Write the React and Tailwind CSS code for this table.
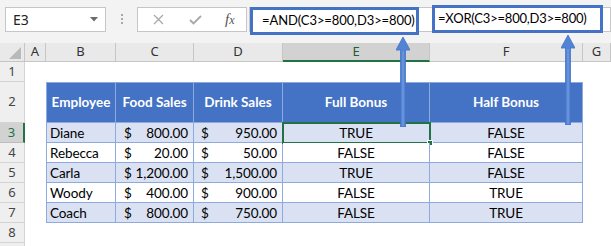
import React from "react";

const cols = ["A", "B", "C", "D", "E", "F", "G"];

const rows = [
  { name: "Diane", food: "800.00", drink: "950.00", full: "TRUE", half: "FALSE" },
  { name: "Rebecca", food: "20.00", drink: "50.00", full: "FALSE", half: "FALSE" },
  { name: "Carla", food: "1,200.00", drink: "1,500.00", full: "TRUE", half: "FALSE" },
  { name: "Woody", food: "400.00", drink: "900.00", full: "FALSE", half: "TRUE" },
  { name: "Coach", food: "800.00", drink: "750.00", full: "FALSE", half: "TRUE" },
];

const cellFont = { fontFamily: "Lato, 'Liberation Sans', sans-serif" };
const uiFont = { fontFamily: "'Noto Sans', 'Open Sans', sans-serif" };

function RowHead({ n, selected }) {
  return (
    <div
      className={
        "flex items-center justify-center border-b border-r text-[13px] " +
        (selected
          ? "bg-[#d2d2d2] border-b-[#bdbdbd] border-r-2 border-r-[#217346] text-[#217346]"
          : "bg-[#efefef] border-[#d4d4d4] text-[#444]")
      }
      style={uiFont}
    >
      {n}
    </div>
  );
}

function Arrow({ className }) {
  return (
    <svg className={className} viewBox="0 0 14 90" width="14" height="90">
      <path
        d="M7 0 L14 13 L9.5 13 L9.5 90 L4.5 90 L4.5 13 L0 13 Z"
        fill="#5283d4"
        stroke="#4472c4"
        strokeWidth="0.8"
      />
      <line x1="7" y1="14" x2="7" y2="89" stroke="#6d97dd" strokeWidth="1.6" />
    </svg>
  );
}

export default function App() {
  return (
    <div className="relative w-[611px] h-[246px] overflow-hidden bg-white">
      {/* formula bar strip */}
      <div className="flex h-[43px] items-start bg-[#f3f3f3] pt-[7px] pl-[5px]">
        <div
          className="flex h-[25px] w-[101px] items-center justify-between border border-[#c6c6c6] bg-white pl-[7px] pr-[7px] text-[14px] text-[#222]"
          style={uiFont}
        >
          <span>E3</span>
          <svg width="8" height="5" viewBox="0 0 8 5">
            <path d="M0 0 L8 0 L4 4.5 Z" fill="#6b6b6b" />
          </svg>
        </div>
        <div className="flex w-[31px] flex-col items-center gap-[2px] pt-[7px]">
          <span className="h-[2px] w-[2px] bg-[#a8a8a8]" />
          <span className="h-[2px] w-[2px] bg-[#a8a8a8]" />
          <span className="h-[2px] w-[2px] bg-[#a8a8a8]" />
        </div>
        <div className="flex h-[25px] w-[110px] items-center border border-[#c6c6c6] bg-white">
          <svg className="ml-[15px]" width="11" height="11" viewBox="0 0 11 11">
            <path d="M1 1 L10 10 M10 1 L1 10" stroke="#a8a8a8" strokeWidth="1.3" />
          </svg>
          <svg className="ml-[25px]" width="13" height="10" viewBox="0 0 13 10">
            <path d="M1 5 L4.5 8.5 L12 1" stroke="#a8a8a8" strokeWidth="1.8" fill="none" />
          </svg>
          <span
            className="ml-[23px] text-[15px] italic text-[#555]"
            style={{ fontFamily: "'Liberation Serif', serif" }}
          >
            f<span className="text-[12px]">x</span>
          </span>
        </div>
        <div className="ml-[2px] h-[25px] flex-1 border border-[#c6c6c6] bg-white" />
      </div>

      {/* sheet */}
      <div
        className="grid grid-cols-[25px_21px_70px_78px_89px_147px_153px_1fr] grid-rows-[19px_20px_41px_20px_20px_20px_20px_20px_20px_20px]"
        style={cellFont}
      >
        {/* column headers */}
        <div className="relative border-b border-r border-[#c6c6c6] bg-[#e9e9e9]">
          <svg className="absolute right-[3px] bottom-[2px]" width="12" height="12" viewBox="0 0 12 12">
            <path d="M12 0 L12 12 L0 12 Z" fill="#b9b9b9" />
          </svg>
        </div>
        {cols.map((c) => (
          <div
            key={c}
            className={
              "flex items-center justify-center border-r text-[13px] " +
              (c === "E"
                ? "bg-[#d2d2d2] border-r-[#c6c6c6] border-b-2 border-b-[#217346] text-[#1e5e3a]"
                : "bg-[#e9e9e9] border-r-[#c6c6c6] border-b border-b-[#c6c6c6] text-[#333]")
            }
            style={uiFont}
          >
            {c}
          </div>
        ))}

        {/* row 1 */}
        <RowHead n={1} />
        <div className="col-span-7" />

        {/* row 2: table header */}
        <RowHead n={2} />
        <div />
        {["Employee", "Food Sales", "Drink Sales", "Full Bonus", "Half Bonus"].map((h, i) => (
          <div
            key={h}
            className={
              "flex items-center justify-center border-t border-r border-b border-[#8ea9db] bg-[#4472c4] text-[13.5px] font-bold text-white " +
              (i === 0 ? "border-l" : "")
            }
          >
            {h}
          </div>
        ))}
        <div />

        {/* data rows */}
        {rows.map((r, i) => {
          const band = i % 2 === 0 ? "bg-[#d9e1f2]" : "bg-white";
          const cell =
            "border-r border-b border-[#8ea9db] text-[13.5px] tracking-[-0.1px] text-black flex items-center pt-[1px] " +
            band;
          return (
            <React.Fragment key={r.name}>
              <RowHead n={i + 3} selected={i === 0} />
              <div />
              <div className={cell + " border-l pl-[3px]"}>{r.name}</div>
              <div className={cell + " justify-between pl-[8px] pr-[5px]"}>
                <span>$</span>
                <span>{r.food}</span>
              </div>
              <div className={cell + " justify-between pl-[7px] pr-[5px]"}>
                <span>$</span>
                <span>{r.drink}</span>
              </div>
              <div className={cell + " relative justify-center"}>
                {r.full}
                {i === 0 && (
                  <div className="absolute -left-px -top-px h-[22px] w-[149px] border-2 border-[#217346]">
                    <span className="absolute -bottom-[4px] -right-[4px] h-[6px] w-[6px] border border-white bg-[#217346]" />
                  </div>
                )}
              </div>
              <div className={cell + " justify-center"}>{r.half}</div>
              <div />
            </React.Fragment>
          );
        })}

        <RowHead n={8} />
        <div className="col-span-7" />
        <RowHead n="" />
        <div className="col-span-7" />
      </div>

      {/* formula callouts */}
      <div
        className="absolute left-[250px] top-[7px] flex h-[28px] w-[169px] items-center border-[3px] border-[#4472c4] bg-white pl-[9px] text-[13px] tracking-[-0.1px] text-black"
        style={cellFont}
      >
        =AND(C3&gt;=800,D3&gt;=800)
      </div>
      <div
        className="absolute left-[432px] top-[5px] flex h-[28px] w-[171px] items-center border-[3px] border-[#4472c4] bg-white pl-[3px] text-[13px] tracking-[-0.2px] text-black"
        style={cellFont}
      >
        =XOR(C3&gt;=800,D3&gt;=800)
      </div>
      <Arrow className="absolute left-[396px] top-[37px]" />
      <Arrow className="absolute left-[561px] top-[35px]" />
    </div>
  );
}
